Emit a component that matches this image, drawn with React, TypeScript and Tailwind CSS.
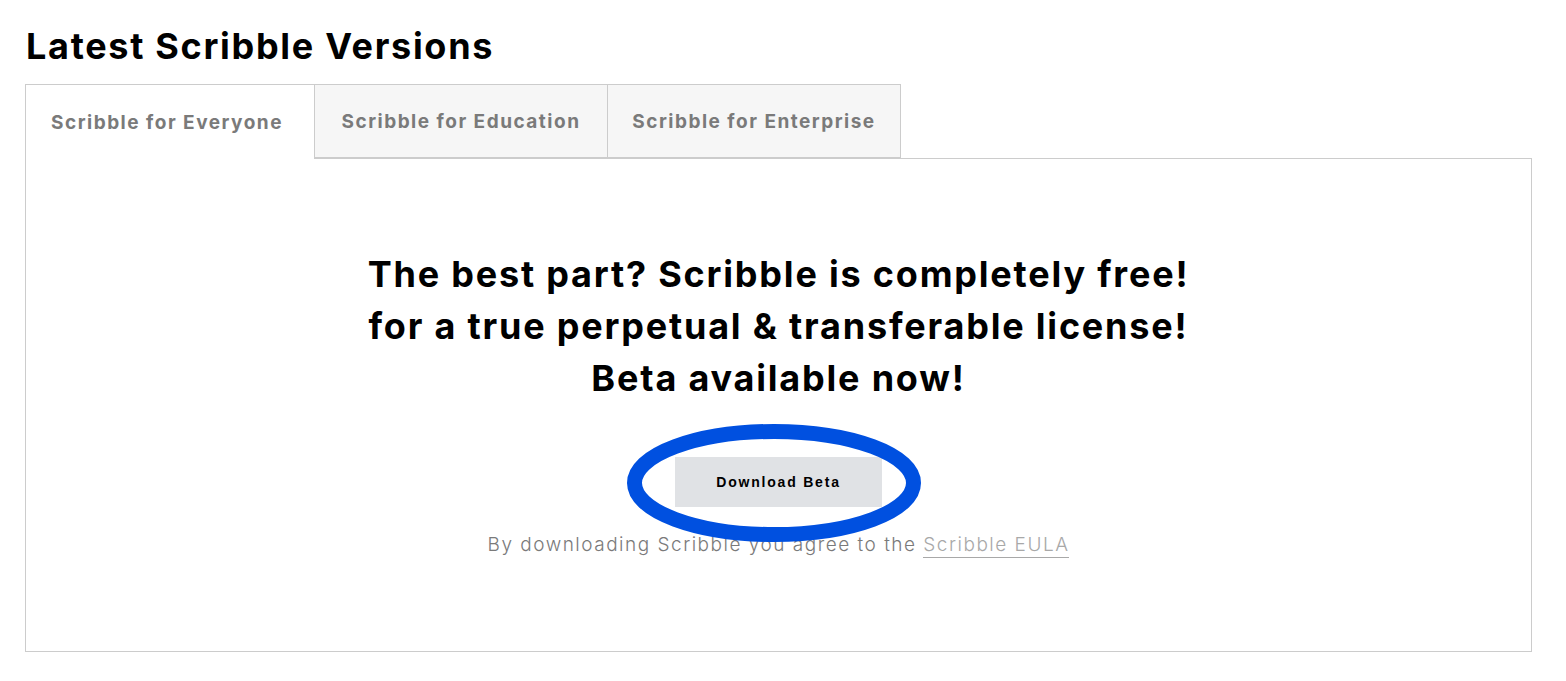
import React from "react";

const tabs = ["Scribble for Everyone", "Scribble for Education", "Scribble for Enterprise"];

export default function App() {
    const active = 0;
    return (
        <div className="w-[1566px] h-[681px] bg-white pl-[25px] pr-[34px] pt-[24px] font-['Inter',sans-serif]">
            <h2 className="text-[36px] leading-[44px] font-bold text-black tracking-[1.7px] ml-[1px]">Latest Scribble Versions</h2>

            {/* Tabs */}
            <div className="flex mt-[16px] h-[75px]">
                {tabs.map((t, i) => (
                    <div
                        key={t}
                        className={
                            i === active
                                ? "w-[290px] border border-[#cccccc] border-b-0 bg-white flex items-center justify-center pt-[2px] pr-[6px] text-[19px] font-bold tracking-[1.5px] text-[#7a7a7a] relative z-10 h-[75px]"
                                : "w-[293px] border border-[#cccccc] border-l-0 bg-[#f6f6f6] flex items-center justify-center pt-[3px] text-[19px] font-bold tracking-[1.5px] text-[#7a7a7a] h-[74px]"
                        }
                    >
                        {t}
                    </div>
                ))}
            </div>

            {/* Panel */}
            <div className="border border-[#cccccc] -mt-[1px] h-[494px] flex flex-col items-center pt-[89px]">
                <h3 className="text-[36px] leading-[52px] font-bold text-black text-center tracking-[1.8px]">
                    The best part? Scribble is completely free!
                    <br />
                    for a true perpetual &amp; transferable license!
                    <br />
                    Beta available now!
                </h3>

                <div className="relative mt-[53px]">
                    <button className="w-[207px] h-[50px] bg-[#e0e2e5] text-[14px] font-bold tracking-[1.8px] text-black font-['Liberation_Sans',sans-serif]">
                        Download Beta
                    </button>
                    <svg className="absolute left-[-48px] top-[-33px] pointer-events-none" width="296" height="120" viewBox="0 0 296 120">
                        <ellipse cx="147" cy="59" rx="139.5" ry="51.5" fill="none" stroke="#0050e0" strokeWidth="15" />
                    </svg>
                </div>

                <p className="mt-[24px] text-[19px] text-[#7a7a7a] font-light tracking-[1.5px]">
                    By downloading Scribble you agree to the{" "}
                    <a className="text-[#a8a8a8] border-b border-[#a8a8a8] pb-[1px]">Scribble EULA</a>
                </p>
            </div>
        </div>
    );
}
